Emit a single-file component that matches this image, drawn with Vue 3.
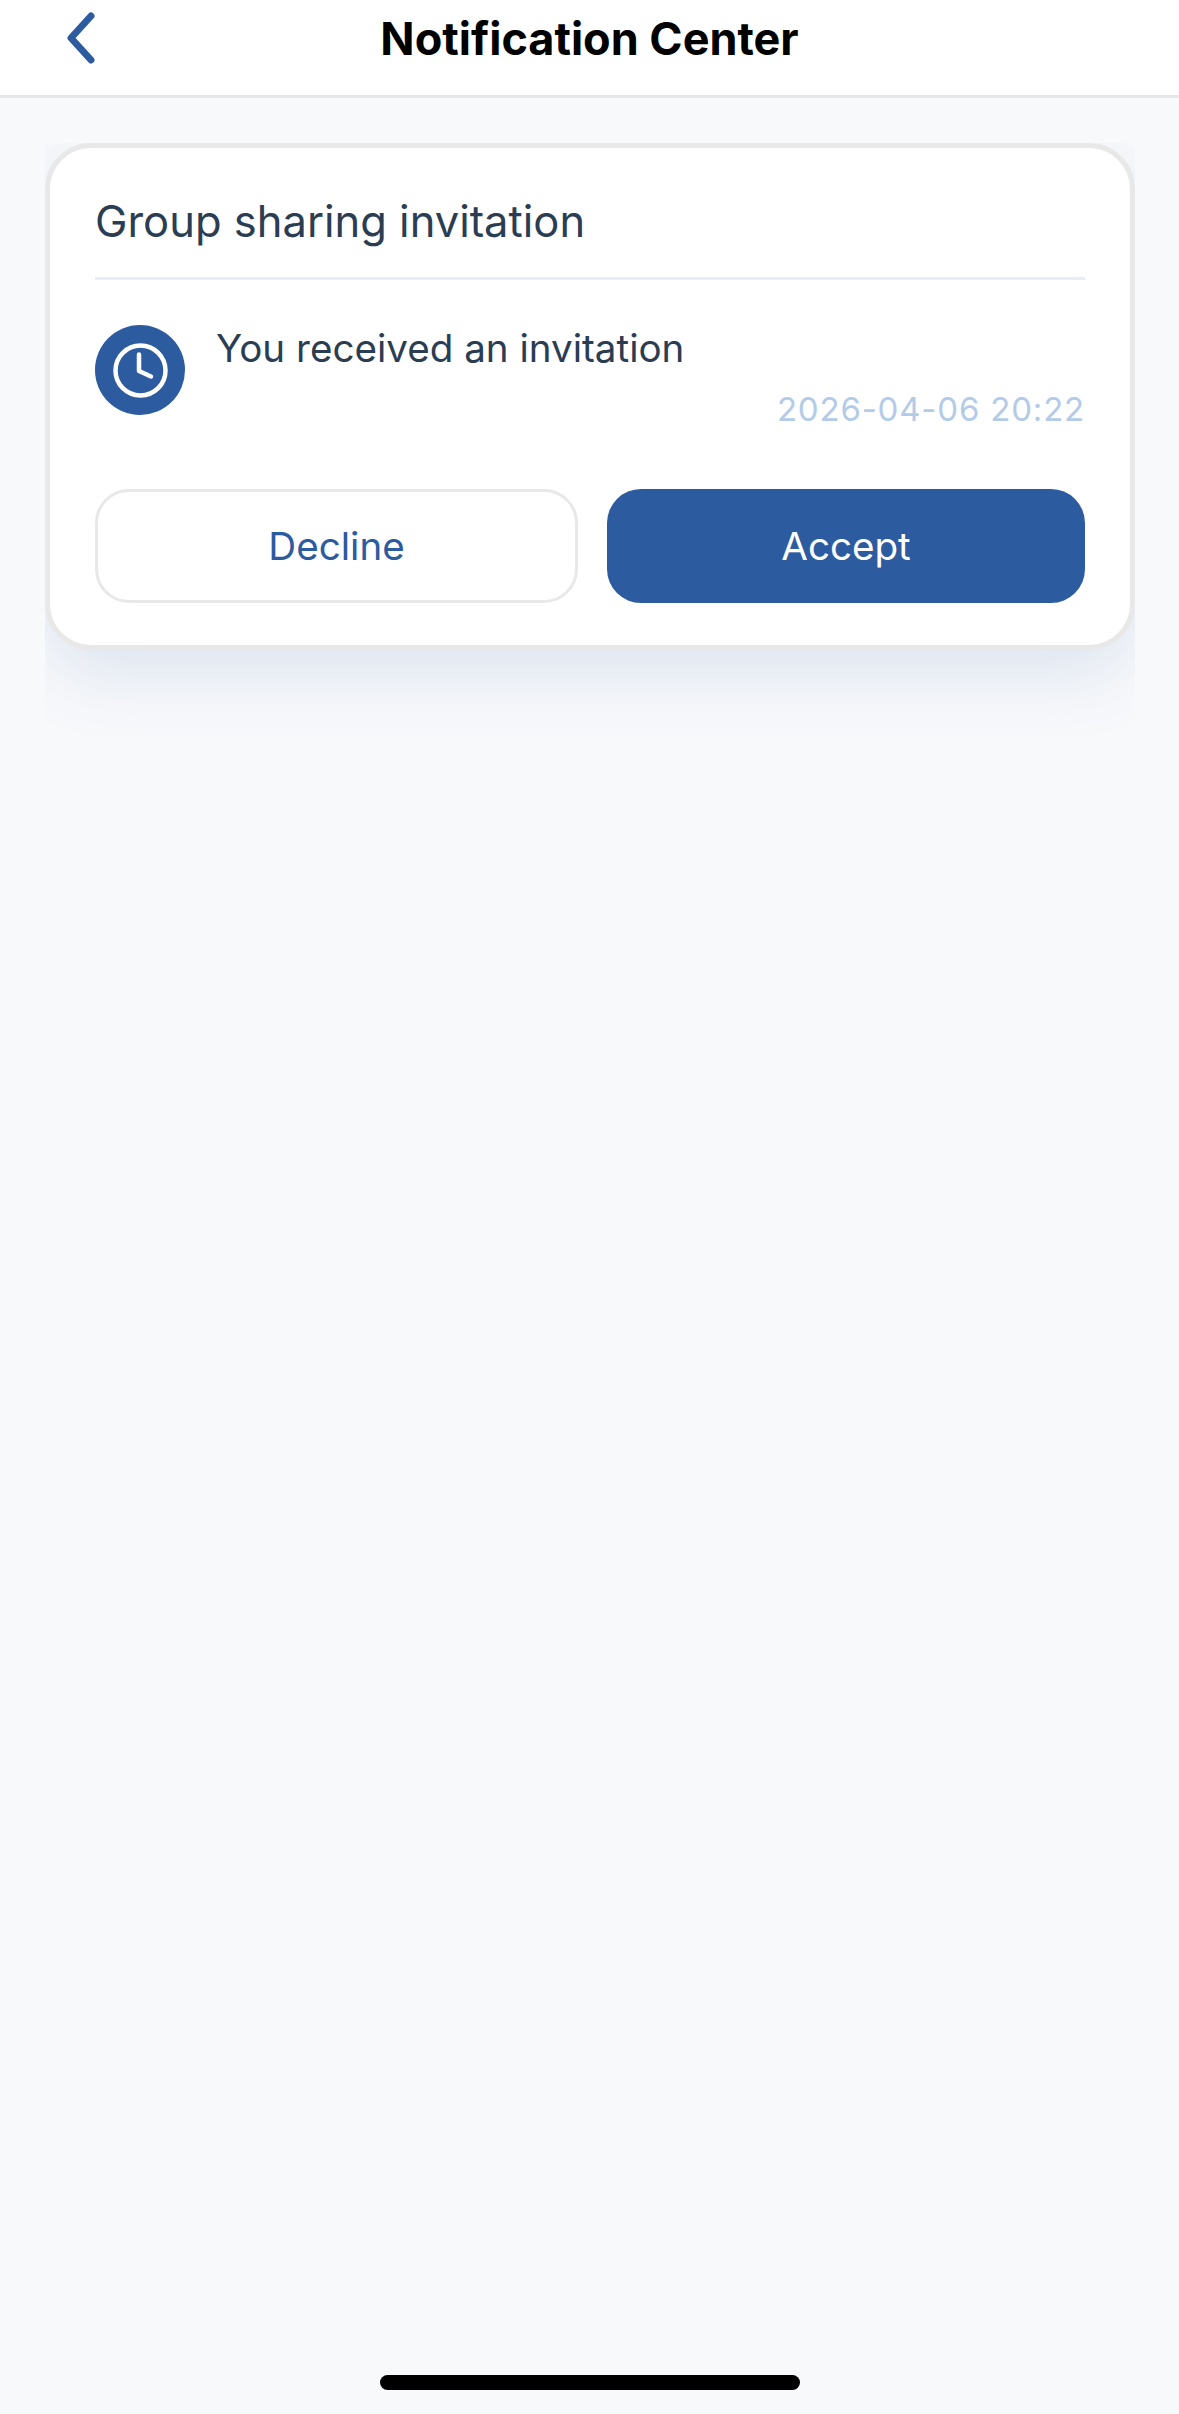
<template>
  <div class="page">
    <header class="nav">
      <button class="back" aria-label="Back">
        <svg width="32" height="52" viewBox="0 0 32 52">
          <path d="M27 4 L7 26 L27 48" fill="none" stroke="#2c5ba0" stroke-width="7" stroke-linecap="round" stroke-linejoin="round" />
        </svg>
      </button>
      <h1 class="nav-title">Notification Center</h1>
      <span></span>
    </header>

    <main class="list">
      <div class="clip">
        <section class="card">
          <h2 class="card-title">{{ notice.title }}</h2>
          <div class="body">
            <div class="avatar">
              <svg width="55" height="55" viewBox="0 0 55 55">
                <circle cx="27.5" cy="27.5" r="25" fill="none" stroke="#fff" stroke-width="4.5" />
                <path d="M26 11.5 V28 L38 33.5" fill="none" stroke="#fff" stroke-width="4.5" stroke-linecap="round" stroke-linejoin="round" />
              </svg>
            </div>
            <div class="body-text">
              <p class="message">{{ notice.message }}</p>
              <p class="time">{{ notice.time }}</p>
            </div>
          </div>
          <div class="actions">
            <button class="btn decline">Decline</button>
            <button class="btn accept">Accept</button>
          </div>
        </section>
      </div>
    </main>

    <div class="home-bar"></div>
  </div>
</template>

<script setup>
const notice = {
  title: 'Group sharing invitation',
  message: 'You received an invitation',
  time: '2026-04-06 20:22',
};
</script>

<style scoped>
.page {
  width: 1179px;
  height: 2414px;
  display: flex;
  flex-direction: column;
  background: #f8f9fb;
  font-family: Inter, "Liberation Sans", sans-serif;
  overflow: hidden;
}

.nav {
  height: 95px;
  display: grid;
  grid-template-columns: 1fr auto 1fr;
  align-items: center;
  background: #fff;
  border-bottom: 3px solid #e6e7e9;
  box-sizing: content-box;
}

.back {
  width: 32px;
  height: 52px;
  margin: -20px 0 0 64px;
  padding: 0;
  border: 0;
  background: none;
  display: block;
}

.nav-title {
  margin: -18px 0 0;
  font-size: 45px;
  line-height: 52px;
  font-weight: 700;
  color: #000;
}

.list {
  flex: 1;
  padding: 45px 44px 0 45px;
}

.clip {
  overflow: hidden;
  padding-bottom: 95px;
}

.card {
  box-sizing: border-box;
  height: 507px;
  padding: 0 45px;
  background: #fff;
  border: 5px solid #e8e8e8;
  border-radius: 46px;
  box-shadow: 0 24px 70px rgba(44, 91, 160, 0.13);
}

.card-title {
  margin: 0;
  height: 132px;
  padding-top: 46px;
  box-sizing: border-box;
  font-size: 43.5px;
  line-height: 54px;
  font-weight: 400;
  color: #2b3d52;
  border-bottom: 3px solid #e8eef6;
}

.body {
  display: flex;
  gap: 31px;
  padding-top: 45px;
}

.avatar {
  flex: none;
  width: 90px;
  height: 90px;
  border-radius: 50%;
  background: #2c5ba0;
  display: flex;
  align-items: center;
  justify-content: center;
}

.body-text {
  flex: 1;
}

.message {
  margin: 0;
  font-size: 38.6px;
  line-height: 46px;
  color: #2b3d52;
}

.time {
  margin: 18px 0 0;
  text-align: right;
  font-size: 33px;
  line-height: 40px;
  letter-spacing: 0.8px;
  color: #b3cbe8;
}

.actions {
  display: grid;
  grid-template-columns: 483px 478px;
  justify-content: space-between;
  margin-top: 60px;
}

.btn {
  height: 114px;
  box-sizing: border-box;
  border-radius: 34px;
  font-family: inherit;
  font-size: 38.6px;
  padding: 0;
}

.decline {
  background: #fff;
  border: 3px solid #e8e8e8;
  color: #2c5ba0;
}

.accept {
  background: #2c5ba0;
  border: 0;
  color: #fff;
}

.home-bar {
  width: 420px;
  height: 15px;
  margin: 0 auto 24px;
  border-radius: 8px;
  background: #000;
}
</style>
